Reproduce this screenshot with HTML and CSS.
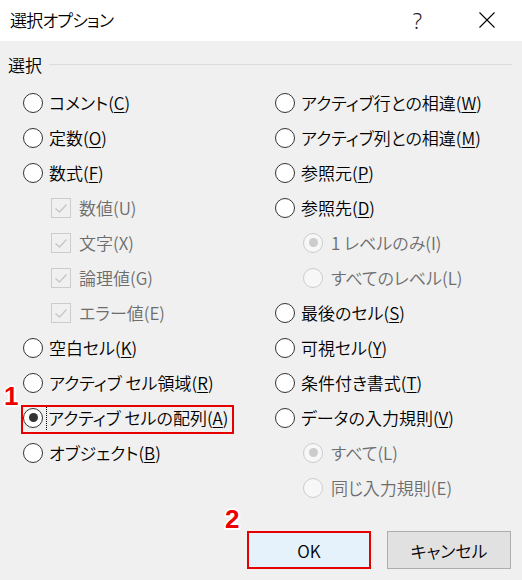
FILE: index.html
```html
<!DOCTYPE html>
<html lang="ja">
<head>
<meta charset="utf-8">
<link rel="stylesheet" href="styles.css">
</head>
<body>
<div class="dialog">
  <div class="titlebar">
    <span class="title">選択オプション</span>
    <span class="help">?</span>
    <svg class="close" width="16" height="16" viewBox="0 0 16 16"><path d="M0.5 0.5 L15.5 15.5 M15.5 0.5 L0.5 15.5" stroke="#000" stroke-width="1.1" fill="none"/></svg>
  </div>
  <div class="content">
    <div class="group-head"><span class="group-label">選択</span><span class="group-line"></span></div>
    <div class="cols">
      <div class="col">
        <div class="row"><span class="radio"></span><span class="label">コメント(<u>C</u>)</span></div>
        <div class="row"><span class="radio"></span><span class="label">定数(<u>O</u>)</span></div>
        <div class="row"><span class="radio"></span><span class="label">数式(<u>F</u>)</span></div>
        <div class="row sub disabled"><span class="check"><svg width="20" height="20" viewBox="0 0 20 20"><path d="M4.5 10.5 L8.5 14 L15.5 6.5" stroke="#c6c6c6" stroke-width="1.3" fill="none"/></svg></span><span class="label">数値(U)</span></div>
        <div class="row sub disabled"><span class="check"><svg width="20" height="20" viewBox="0 0 20 20"><path d="M4.5 10.5 L8.5 14 L15.5 6.5" stroke="#c6c6c6" stroke-width="1.3" fill="none"/></svg></span><span class="label">文字(X)</span></div>
        <div class="row sub disabled"><span class="check"><svg width="20" height="20" viewBox="0 0 20 20"><path d="M4.5 10.5 L8.5 14 L15.5 6.5" stroke="#c6c6c6" stroke-width="1.3" fill="none"/></svg></span><span class="label">論理値(G)</span></div>
        <div class="row sub disabled"><span class="check"><svg width="20" height="20" viewBox="0 0 20 20"><path d="M4.5 10.5 L8.5 14 L15.5 6.5" stroke="#c6c6c6" stroke-width="1.3" fill="none"/></svg></span><span class="label">エラー値(E)</span></div>
        <div class="row"><span class="radio"></span><span class="label">空白セル(<u>K</u>)</span></div>
        <div class="row"><span class="radio"></span><span class="label">アクティブ セル領域(<u>R</u>)</span></div>
        <div class="row marked"><span class="radio checked"></span><span class="label focus">アクティブ セルの配列(<u>A</u>)</span></div>
        <div class="row"><span class="radio"></span><span class="label">オブジェクト(<u>B</u>)</span></div>
      </div>
      <div class="col">
        <div class="row"><span class="radio"></span><span class="label">アクティブ行との相違(<u>W</u>)</span></div>
        <div class="row"><span class="radio"></span><span class="label">アクティブ列との相違(<u>M</u>)</span></div>
        <div class="row"><span class="radio"></span><span class="label">参照元(<u>P</u>)</span></div>
        <div class="row"><span class="radio"></span><span class="label">参照先(<u>D</u>)</span></div>
        <div class="row sub disabled"><span class="radio checked"></span><span class="label">1 レベルのみ(I)</span></div>
        <div class="row sub disabled"><span class="radio"></span><span class="label">すべてのレベル(L)</span></div>
        <div class="row"><span class="radio"></span><span class="label">最後のセル(<u>S</u>)</span></div>
        <div class="row"><span class="radio"></span><span class="label">可視セル(<u>Y</u>)</span></div>
        <div class="row"><span class="radio"></span><span class="label">条件付き書式(<u>T</u>)</span></div>
        <div class="row"><span class="radio"></span><span class="label">データの入力規則(<u>V</u>)</span></div>
        <div class="row sub disabled"><span class="radio checked"></span><span class="label">すべて(L)</span></div>
        <div class="row sub disabled"><span class="radio"></span><span class="label">同じ入力規則(E)</span></div>
      </div>
    </div>
    <div class="buttons">
      <button class="btn ok">OK</button>
      <button class="btn">キャンセル</button>
    </div>
  </div>
  <span class="step step1">1</span>
  <span class="step step2">2</span>
</div>
</body>
</html>
```
FILE: styles.css
```css
* { box-sizing: border-box; }
html, body { margin: 0; padding: 0; }
body {
  width: 522px;
  height: 580px;
  background: #f0f0f0;
  font-family: "Noto Sans CJK JP", "Noto Sans", sans-serif;
  font-feature-settings: "palt";
  font-weight: 350;
  color: #000;
  overflow: hidden;
}
.dialog {
  position: relative;
  width: 522px;
  height: 580px;
}
.titlebar {
  height: 41px;
  background: #fff;
  display: flex;
  align-items: center;
  padding: 0 27px 2px 10px;
}
.title {
  font-size: 17px;
  flex: 1;
  letter-spacing: -0.8px;
}
.help {
  font-family: "Noto Sans", sans-serif;
  font-size: 22px;
  font-weight: 300;
  color: #222;
  margin-right: 57px;
}
.close { display: block; }
.group-head {
  display: flex;
  align-items: center;
  height: 22px;
  margin: 13px 10px 0 8px;
  gap: 7px;
}
.group-label { font-size: 17px; line-height: 22px; }
.group-line {
  flex: 1;
  height: 1px;
  background: #dcdcdc;
  margin-top: -1px;
}
.cols {
  display: grid;
  grid-template-columns: 252px 1fr;
  padding-left: 23px;
  margin-top: 9px;
}
.row {
  display: flex;
  align-items: center;
  height: 35px;
  gap: 6px;
  font-size: 17px;
}
.row.sub { padding-left: 28px; }
.row.sub .label { margin-left: 2px; }
.label { line-height: 25px; white-space: nowrap; }
.label u { text-underline-offset: 2px; text-decoration-thickness: 1px; }
.disabled .label { color: #6d6d6d; }
.radio {
  width: 20px;
  height: 20px;
  border-radius: 50%;
  border: 1.5px solid #333;
  background: #fff;
  display: flex;
  align-items: center;
  justify-content: center;
  flex: none;
}
.radio.checked::after {
  content: "";
  width: 9px;
  height: 9px;
  border-radius: 50%;
  background: #333;
}
.disabled .radio {
  border-color: #cccccc;
  background: #f7f7f7;
}
.disabled .radio.checked::after { background: #cccccc; }
.check {
  width: 20px;
  height: 20px;
  border: 1px solid #cccccc;
  flex: none;
  display: block;
}
.check svg { display: block; margin: -1px; }
.row.marked { position: relative; }
.row.marked::before {
  content: "";
  position: absolute;
  left: -2px;
  top: 5px;
  width: 209px;
  height: 25px;
  border: 2px solid #e60000;
}
.focus {
  border-left: 1px dotted #000;
  padding-left: 1px;
  margin-left: -3px;
}
.buttons {
  display: flex;
  justify-content: flex-end;
  gap: 16px;
  padding-right: 11px;
  margin-top: 26px;
}
.btn {
  width: 124px;
  height: 38px;
  font-family: "Noto Sans CJK JP", "Noto Sans", sans-serif;
  font-feature-settings: "palt";
  font-weight: 350;
  font-size: 17px;
  color: #000;
  background: #e1e1e1;
  border: 1px solid #adadad;
  padding: 0;
}
.btn.ok {
  background: #e5f1fb;
  border: 2px solid #e60000;
}
.step {
  position: absolute;
  font-family: "Liberation Sans", Arial, sans-serif;
  font-weight: bold;
  font-size: 26px;
  line-height: 1;
  color: #ee0000;
  text-shadow: 2px 0 #fff, -2px 0 #fff, 0 2px #fff, 0 -2px #fff, 1.5px 1.5px #fff, -1.5px 1.5px #fff, 1.5px -1.5px #fff, -1.5px -1.5px #fff;
}
.step1 { left: 4px; top: 383px; }
.step2 { left: 225px; top: 506px; }
```
